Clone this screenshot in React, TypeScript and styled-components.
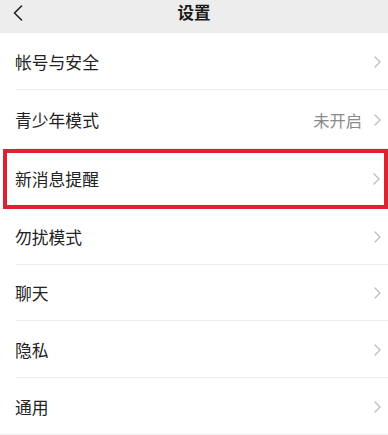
import React from "react";
import styled, { createGlobalStyle } from "styled-components";

const Global = createGlobalStyle`
  html, body { margin: 0; padding: 0; background: #ffffff; }
  body { font-family: "Noto Sans CJK SC", "Noto Sans", sans-serif; }
`;

const Page = styled.div`
  width: 388px;
  height: 435px;
  overflow: hidden;
  background: #ffffff;
  display: flex;
  flex-direction: column;
`;

const Header = styled.header`
  height: 33px;
  flex: none;
  background: #ededed;
  display: grid;
  grid-template-columns: 40px 1fr 40px;
  align-items: start;
`;

const BackBtn = styled.div`
  padding: 5px 0 0 12px;
  height: 15px;
`;

const Title = styled.div`
  text-align: center;
  font-size: 16.5px;
  font-weight: 700;
  color: #1b1b1b;
  line-height: 24px;
  letter-spacing: 0;
`;

const List = styled.div`
  display: flex;
  flex-direction: column;
`;

const Row = styled.div<{ $h: number; $highlight?: boolean; $fullLine?: boolean }>`
  position: relative;
  height: ${(p) => p.$h}px;
  box-sizing: border-box;
  display: flex;
  align-items: center;
  padding: 0 6px 0 15px;
  ${(p) =>
    p.$highlight
      ? `
    margin-left: 3px;
    border: 4.5px solid #e0212f;
    padding-left: 8px;
    padding-right: 3px;
  `
      : ""}
  &::after {
    content: "";
    position: absolute;
    left: ${(p) => (p.$fullLine ? 0 : 16)}px;
    right: 0;
    bottom: 0;
    height: 1px;
    background: ${(p) => (p.$highlight ? "transparent" : "#eeeeee")};
  }
`;

const Label = styled.span`
  flex: 1;
  font-size: 16.8px;
  color: #222222;
  line-height: 24px;
`;

const Value = styled.span`
  font-size: 16.3px;
  color: #8a8a8a;
  margin-right: 10px;
  line-height: 24px;
`;

const Chevron = () => (
  <svg width="10" height="14" viewBox="0 0 10 14" style={{ display: "block" }}>
    <path d="M3 2 L8 7 L3 12" fill="none" stroke="#bdbdbd" strokeWidth="1.3" strokeLinecap="round" strokeLinejoin="round" />
  </svg>
);

const BackIcon = () => (
  <svg width="12" height="16" viewBox="0 0 12 16" style={{ display: "block" }}>
    <path d="M9.5 1 L2.5 8 L9.5 15" fill="none" stroke="#222" strokeWidth="1.6" strokeLinecap="round" strokeLinejoin="round" />
  </svg>
);

type Item = { label: string; value?: string; h: number; highlight?: boolean; full?: boolean };

const items: Item[] = [
  { label: "帐号与安全", h: 57 },
  { label: "青少年模式", value: "未开启", h: 59 },
  { label: "新消息提醒", h: 60, highlight: true },
  { label: "勿扰模式", h: 56 },
  { label: "聊天", h: 56 },
  { label: "隐私", h: 57 },
  { label: "通用", h: 57, full: true },
];

export default function App() {
  return (
    <>
      <Global />
      <Page>
        <Header>
          <BackBtn>
            <BackIcon />
          </BackBtn>
          <Title>设置</Title>
          <div />
        </Header>
        <List>
          {items.map((it) => (
            <Row key={it.label} $h={it.h} $highlight={it.highlight} $fullLine={it.full}>
              <Label>{it.label}</Label>
              {it.value && <Value>{it.value}</Value>}
              <Chevron />
            </Row>
          ))}
        </List>
      </Page>
    </>
  );
}
